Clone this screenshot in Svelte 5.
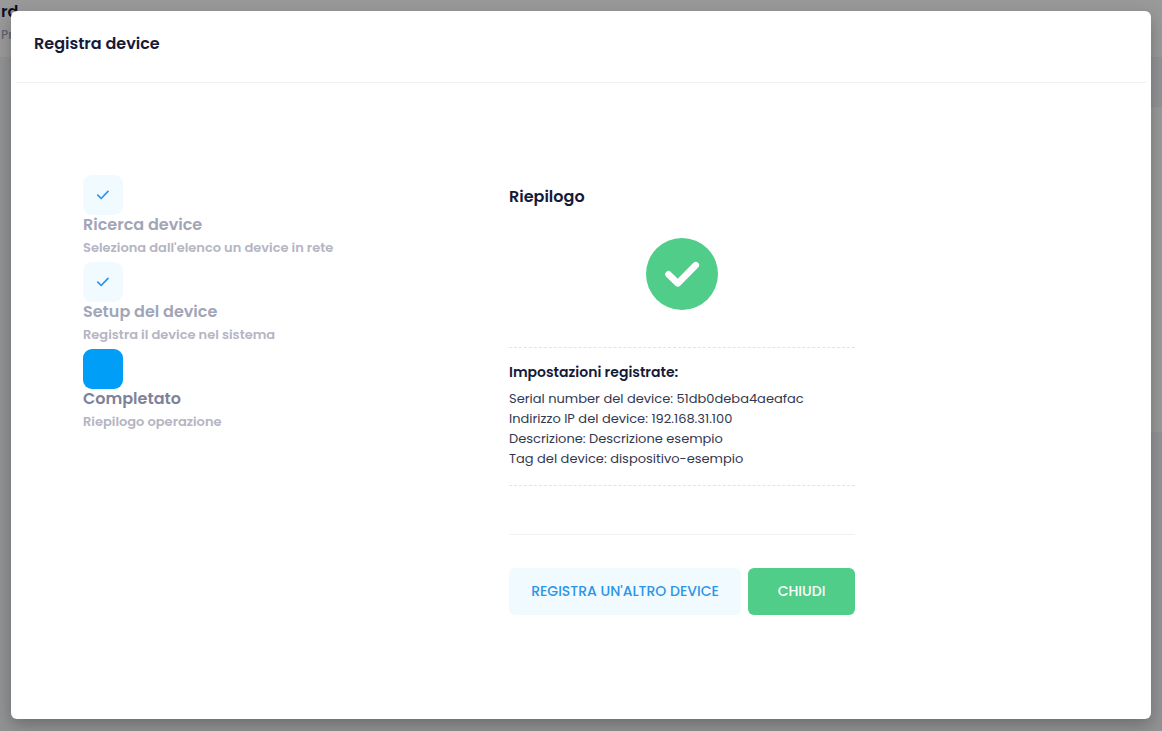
<script>
  const steps = [
    { title: 'Ricerca device', text: "Seleziona dall'elenco un device in rete", done: true },
    { title: 'Setup del device', text: 'Registra il device nel sistema', done: true },
    { title: 'Completato', text: 'Riepilogo operazione', done: false }
  ];
  const settings = [
    ['Serial number del device', '51db0deba4aeafac'],
    ['Indirizzo IP del device', '192.168.31.100'],
    ['Descrizione', 'Descrizione esempio'],
    ['Tag del device', 'dispositivo-esempio']
  ];
</script>

<div class="screen">
  <div class="page" aria-hidden="true">
    <header class="topbar">
      <strong>rd</strong>
      <span>Pr</span>
    </header>
    <div class="panel"></div>
  </div>

  <div class="backdrop">
    <div class="modal" role="dialog" aria-modal="true" aria-labelledby="modal-title">
      <header class="modal-header">
        <h2 id="modal-title">Registra device</h2>
      </header>

      <div class="modal-body">
        <ol class="steps">
          {#each steps as step}
            <li class:current={!step.done}>
              <span class="mark">
                {#if step.done}
                  <svg viewBox="0 0 14 12" width="14" height="12" aria-hidden="true">
                    <path d="M1.8 6.2 5.2 9.5 12 2.3" />
                  </svg>
                {/if}
              </span>
              <h3>{step.title}</h3>
              <p>{step.text}</p>
            </li>
          {/each}
        </ol>

        <section class="summary">
          <h3>Riepilogo</h3>
          <svg class="success" viewBox="0 0 72 72" width="72" height="72" aria-hidden="true">
            <circle cx="36" cy="36" r="36" />
            <path d="M22.5 36.3 31.8 45.3 49.8 27.2" />
          </svg>

          <div class="settings">
            <h4>Impostazioni registrate:</h4>
            <ul>
              {#each settings as [label, value]}
                <li>{label}: {value}</li>
              {/each}
            </ul>
          </div>

          <footer class="actions">
            <button type="button" class="light">REGISTRA UN'ALTRO DEVICE</button>
            <button type="button" class="primary">CHIUDI</button>
          </footer>
        </section>
      </div>
    </div>
  </div>
</div>

<style>
  :global(body) {
    margin: 0;
    background: #f1f4f7;
  }

  .screen {
    position: relative;
    min-height: 100vh;
    overflow: hidden;
    font-family: Poppins, Inter, 'Open Sans', sans-serif;
    font-size: 13px;
    color: #151a38;
  }

  .page {
    position: absolute;
    inset: 0;
    display: flex;
    flex-direction: column;
  }

  .topbar {
    display: flex;
    flex-direction: column;
    gap: 4px;
    height: 57px;
    box-sizing: border-box;
    padding: 1px;
    background: #fff;
    line-height: 22px;
  }

  .topbar strong {
    font-size: 16px;
    font-weight: 600;
  }

  .topbar span {
    font-size: 12px;
    line-height: 16px;
    font-weight: 500;
    color: #a1a5b7;
  }

  .panel {
    height: 325px;
    margin-top: 50px;
    margin-left: 24px;
    background: #fff;
  }

  .backdrop {
    position: relative;
    display: flex;
    min-height: 100vh;
    box-sizing: border-box;
    padding: 11px 11px 12px;
    background: rgba(0, 0, 0, 0.4);
  }

  .modal {
    flex: 1;
    border-radius: 6px;
    background: #fff;
    box-shadow: 0 6px 16px rgba(0, 0, 0, 0.25);
  }

  h2,
  h3,
  h4,
  p,
  ul,
  ol {
    margin: 0;
    padding: 0;
  }

  ul,
  ol {
    list-style: none;
  }

  .modal-header {
    margin: 0 5px;
    padding: 21px 18px 26px;
    border-bottom: 1px solid #eff2f5;
  }

  h2,
  .summary h3 {
    font-size: 16px;
    line-height: 24px;
    font-weight: 600;
  }

  .modal-body {
    display: grid;
    grid-template-columns: minmax(260px, 426px) minmax(0, 346px);
    padding: 92px 72px;
  }

  .steps li {
    height: 87px;
  }

  .mark {
    display: flex;
    align-items: center;
    justify-content: center;
    width: 40px;
    height: 40px;
    border-radius: 9px;
    background: #f1faff;
  }

  .mark path {
    fill: none;
    stroke: #2b95e9;
    stroke-width: 1.7;
    stroke-linecap: round;
    stroke-linejoin: round;
  }

  .current .mark {
    background: #009ef7;
  }

  .steps h3 {
    font-size: 16px;
    line-height: 20px;
    font-weight: 600;
    color: #a1a5b7;
  }

  .steps .current h3 {
    color: #7e8299;
  }

  .steps p {
    padding-top: 3px;
    line-height: 20px;
    font-weight: 600;
    color: #b5b5c3;
  }

  .summary {
    display: flex;
    flex-direction: column;
    padding-top: 10px;
  }

  .success {
    align-self: center;
    margin: 29px 0 37px;
  }

  .success circle {
    fill: #50cd89;
  }

  .success path {
    fill: none;
    stroke: #fff;
    stroke-width: 6.6;
    stroke-linecap: round;
    stroke-linejoin: round;
  }

  .settings {
    padding: 14px 0 16px;
    border: 1px dashed #e1e3ea;
    border-width: 1px 0;
  }

  h4 {
    font-size: 14px;
    line-height: 20px;
    font-weight: 600;
  }

  ul {
    padding-top: 7px;
    line-height: 20px;
    color: #34384f;
  }

  .actions {
    display: flex;
    gap: 7px;
    margin-top: 48px;
    padding-top: 33px;
    border-top: 1px solid #eff2f5;
  }

  button {
    height: 47px;
    border: 0;
    border-radius: 6px;
    padding: 0;
    font: inherit;
    font-size: 14px;
    font-weight: 500;
    white-space: nowrap;
    cursor: pointer;
  }

  .light {
    flex: 232;
    background: #f1faff;
    color: #2b95e9;
  }

  .primary {
    flex: 107;
    background: #50cd89;
    color: #fff;
  }
</style>
